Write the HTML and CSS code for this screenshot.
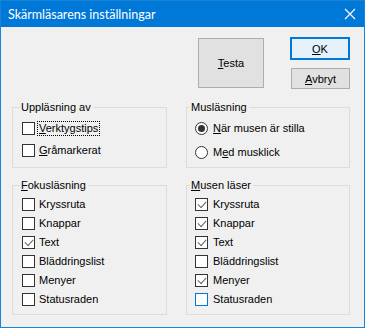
FILE: index.html
```html
<!DOCTYPE html>
<html lang="sv">
<head>
<meta charset="utf-8">
<title>Skärmläsarens inställningar</title>
<link rel="stylesheet" href="styles.css">
</head>
<body>
<div class="window">
  <div class="titlebar">
    <span class="title">Skärmläsarens inställningar</span>
    <svg class="close" width="12" height="12" viewBox="0 0 12 12"><path d="M1 1L11 11M11 1L1 11" stroke="#fff" stroke-width="1.1" fill="none"/></svg>
  </div>
  <div class="content">
    <div class="top">
      <button class="btn testa"><u>T</u>esta</button>
      <div class="side">
        <button class="btn ok"><u>O</u>K</button>
        <button class="btn cancel"><u>A</u>vbryt</button>
      </div>
    </div>
    <div class="row row1">
      <fieldset class="group gleft">
        <legend>Uppläsning av</legend>
        <div class="items tight">
          <div class="item"><span class="cb"></span><span class="lbl focus"><u>V</u>erktygstips</span></div>
          <div class="item"><span class="cb"></span><span class="lbl"><u>G</u>råmarkerat</span></div>
        </div>
      </fieldset>
      <fieldset class="group gright">
        <legend>Musläsning</legend>
        <div class="items radios">
          <div class="item"><span class="rb on"></span><span class="lbl"><u>N</u>är musen är stilla</span></div>
          <div class="item"><span class="rb"></span><span class="lbl">M<u>e</u>d musklick</span></div>
        </div>
      </fieldset>
    </div>
    <div class="row row2">
      <fieldset class="group gleft">
        <legend><u>F</u>okusläsning</legend>
        <div class="items list">
          <div class="item"><span class="cb"></span><span class="lbl">Kryssruta</span></div>
          <div class="item"><span class="cb"></span><span class="lbl">Knappar</span></div>
          <div class="item"><span class="cb checked"></span><span class="lbl">Text</span></div>
          <div class="item"><span class="cb"></span><span class="lbl">Bläddringslist</span></div>
          <div class="item"><span class="cb"></span><span class="lbl">Menyer</span></div>
          <div class="item"><span class="cb"></span><span class="lbl">Statusraden</span></div>
        </div>
      </fieldset>
      <fieldset class="group gright">
        <legend><u>M</u>usen läser</legend>
        <div class="items list">
          <div class="item"><span class="cb checked"></span><span class="lbl">Kryssruta</span></div>
          <div class="item"><span class="cb checked"></span><span class="lbl">Knappar</span></div>
          <div class="item"><span class="cb checked"></span><span class="lbl">Text</span></div>
          <div class="item"><span class="cb"></span><span class="lbl">Bläddringslist</span></div>
          <div class="item"><span class="cb checked"></span><span class="lbl">Menyer</span></div>
          <div class="item"><span class="cb hover"></span><span class="lbl">Statusraden</span></div>
        </div>
      </fieldset>
    </div>
  </div>
</div>
</body>
</html>
```

FILE: styles.css
```css
* { box-sizing: border-box; }
html, body { margin: 0; padding: 0; }
body {
  font-family: "Liberation Sans", Arial, sans-serif;
  font-size: 11px;
  color: #000;
  background: #f0f0f0;
}
.window {
  width: 365px;
  height: 328px;
  border: 1px solid #1883d7;
  background: #f0f0f0;
  display: flex;
  flex-direction: column;
}
.titlebar {
  height: 26px;
  background: #0078d7;
  color: #fff;
  display: flex;
  align-items: center;
  justify-content: space-between;
  padding: 0 8px 0 7px;
  flex: none;
}
.title {
  font-family: Lato, "Open Sans", sans-serif;
  font-size: 12.5px;
}
.close { display: block; }
.content {
  padding: 10px 14px 0 11px;
}
.top {
  display: flex;
  justify-content: flex-end;
  align-items: flex-start;
  height: 52px;
}
.btn {
  font-family: "Liberation Sans", Arial, sans-serif;
  font-size: 11px;
  color: #000;
  background: #e1e1e1;
  border: 1px solid #adadad;
  padding: 0;
  margin: 0;
  border-radius: 0;
}
.testa {
  width: 66px;
  height: 50px;
  margin-top: 1px;
  margin-right: 26px;
}
.side {
  display: flex;
  flex-direction: column;
  gap: 8px;
}
.ok {
  width: 60px;
  height: 23px;
  border: 2px solid #0078d7;
  background: #e5f1fb;
}
.cancel {
  width: 59px;
  height: 21px;
  margin-left: 1px;
}
.row {
  display: flex;
  justify-content: space-between;
  align-items: stretch;
}
.row1 { margin-top: 12px; }
.row2 { margin-top: 11px; }
.group {
  margin: 0;
  border: 1px solid #dcdcdc;
  min-width: 0;
}
.gleft { width: 155px; padding: 0 0 8px 9px; }
.gright { width: 164px; padding: 0 0 8px 8px; }
legend {
  padding: 0 2px 0 1px;
  line-height: 13px;
  margin-left: -2px;
}
.gright legend { margin-left: -5px; }
.items { display: flex; flex-direction: column; }
.tight { padding-top: 8px; gap: 9px; }
.radios { padding-top: 8px; gap: 11px; }
.list { padding-top: 6px; gap: 6px; }
.item {
  display: flex;
  align-items: center;
  height: 13px;
  line-height: 13px;
  white-space: nowrap;
}
.cb {
  width: 13px;
  height: 13px;
  border: 1px solid #333;
  background: #fff;
  flex: none;
  margin-right: 3px;
  display: flex;
  align-items: center;
  justify-content: center;
}
.gright .cb { margin-right: 4px; }
.cb.hover { border-color: #0078d7; }
.cb.checked::after {
  content: "";
  width: 7px;
  height: 4px;
  border-left: 1px solid #666;
  border-bottom: 1px solid #666;
  transform: translate(0, -1px) rotate(-48deg);
}
.rb {
  width: 13px;
  height: 13px;
  border: 1px solid #333;
  border-radius: 50%;
  background: #fff;
  flex: none;
  margin-right: 4px;
  display: flex;
  align-items: center;
  justify-content: center;
}
.rb.on::after {
  content: "";
  width: 7px;
  height: 7px;
  border-radius: 50%;
  background: #333;
}
.lbl { padding: 0 1px; }
.focus { outline: 1px dotted #000; outline-offset: 0; }
u { text-decoration-thickness: 1px; text-underline-offset: 1px; }
```
